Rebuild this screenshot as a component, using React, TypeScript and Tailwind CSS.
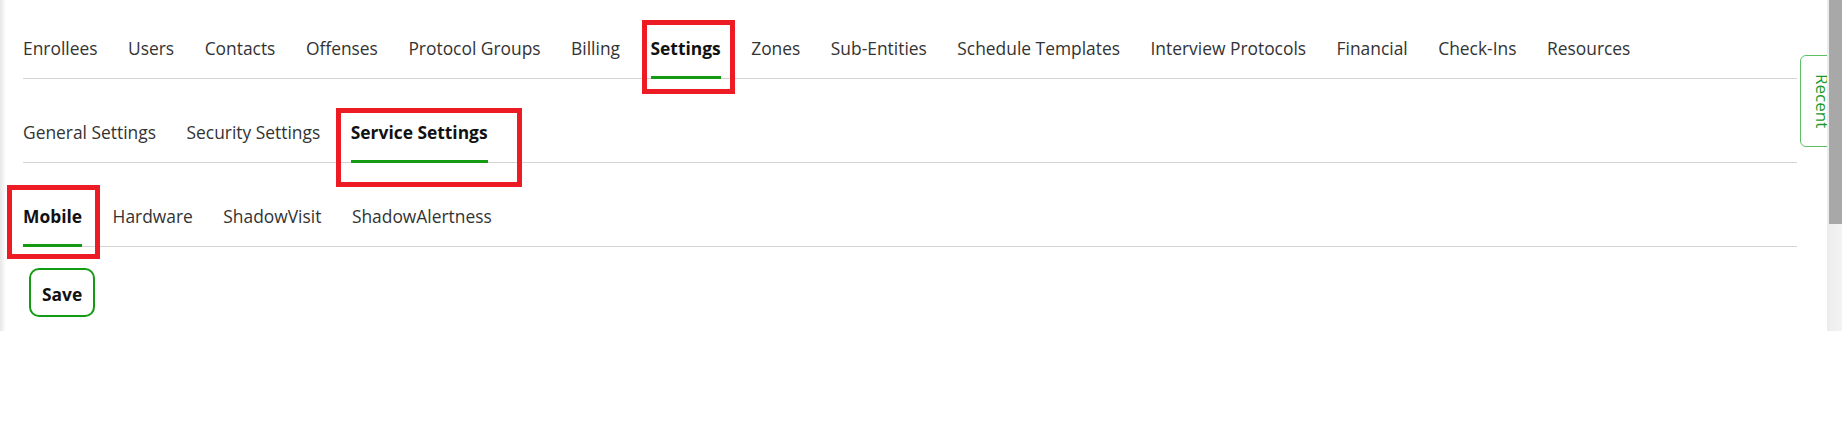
import React from "react";

type Tab = { label: string; active?: boolean; box?: "settings" | "service" | "mobile" };

const row1: Tab[] = [
  { label: "Enrollees" },
  { label: "Users" },
  { label: "Contacts" },
  { label: "Offenses" },
  { label: "Protocol Groups" },
  { label: "Billing" },
  { label: "Settings", active: true, box: "settings" },
  { label: "Zones" },
  { label: "Sub-Entities" },
  { label: "Schedule Templates" },
  { label: "Interview Protocols" },
  { label: "Financial" },
  { label: "Check-Ins" },
  { label: "Resources" },
];

const row2: Tab[] = [
  { label: "General Settings" },
  { label: "Security Settings" },
  { label: "Service Settings", active: true, box: "service" },
];

const row3: Tab[] = [
  { label: "Mobile", active: true, box: "mobile" },
  { label: "Hardware" },
  { label: "ShadowVisit" },
  { label: "ShadowAlertness" },
];

function RedBox({ kind }: { kind: "settings" | "service" | "mobile" }) {
  if (kind === "settings")
    return (
      <div className="pointer-events-none absolute left-[-9px] right-[-14px] top-[-16px] bottom-[-18px] border-[5px] border-[#ed1c24]" />
    );
  if (kind === "service")
    return (
      <div className="pointer-events-none absolute left-[-15px] right-[-34px] top-[-12px] bottom-[-27px] border-[5px] border-[#ed1c24]" />
    );
  return (
    <div className="pointer-events-none absolute left-[-16px] right-[-18px] top-[-19px] bottom-[-15px] border-[5px] border-[#ed1c24]" />
  );
}

function TabRow({ tabs, pt }: { tabs: Tab[]; pt: "first" | "next" }) {
  return (
    <div
      className={
        "flex gap-[30.5px] border-b border-[#d4d4d4] " + (pt === "first" ? "pt-[36px]" : "pt-[41px]")
      }
    >
      {tabs.map((t) => (
        <div
          key={t.label}
          className={
            "relative -mb-px pb-4 border-b-[3px] text-[17.4px] leading-6 whitespace-nowrap " +
            (t.active
              ? "border-[#139b13] font-bold text-[#111111]"
              : "border-transparent text-[#333333]")
          }
        >
          {t.label}
          {t.box && <RedBox kind={t.box} />}
        </div>
      ))}
    </div>
  );
}

export default function App() {
  return (
    <div className="relative h-[427px] w-[1842px] overflow-hidden bg-white font-['Open_Sans',sans-serif]">
      <div className="flex h-[331px]">
        <div className="w-[6px] shrink-0 bg-gradient-to-r from-[#e6e6e6] to-white" />
        <div className="ml-[17px] w-[1774px]">
          <TabRow tabs={row1} pt="first" />
          <TabRow tabs={row2} pt="next" />
          <TabRow tabs={row3} pt="next" />
          <div className="ml-[6px] mt-[21px]">
            <button className="rounded-[10px] border-2 border-[#139b13] bg-white px-[11px] pt-[12px] pb-[9px] text-[17.4px] font-bold leading-6 text-[#111111]">
              Save
            </button>
          </div>
        </div>
      </div>

      {/* Recent side tab */}
      <div className="absolute left-[1800px] top-[55px] flex h-[92px] w-[50px] items-center rounded-l-[6px] border border-[#5cbf66] bg-white pl-[11px]">
        <span className="text-[17px] leading-5 text-[#1e9a2c] [writing-mode:vertical-rl]">Recent</span>
      </div>

      {/* Scrollbar */}
      <div className="absolute left-[1827px] top-0 h-[331px] w-[15px] bg-gradient-to-r from-[#ececec] to-[#f3f3f3]">
        <div className="ml-[2px] h-[224px] w-[13px] bg-[#a8a8a8]" />
      </div>
    </div>
  );
}
